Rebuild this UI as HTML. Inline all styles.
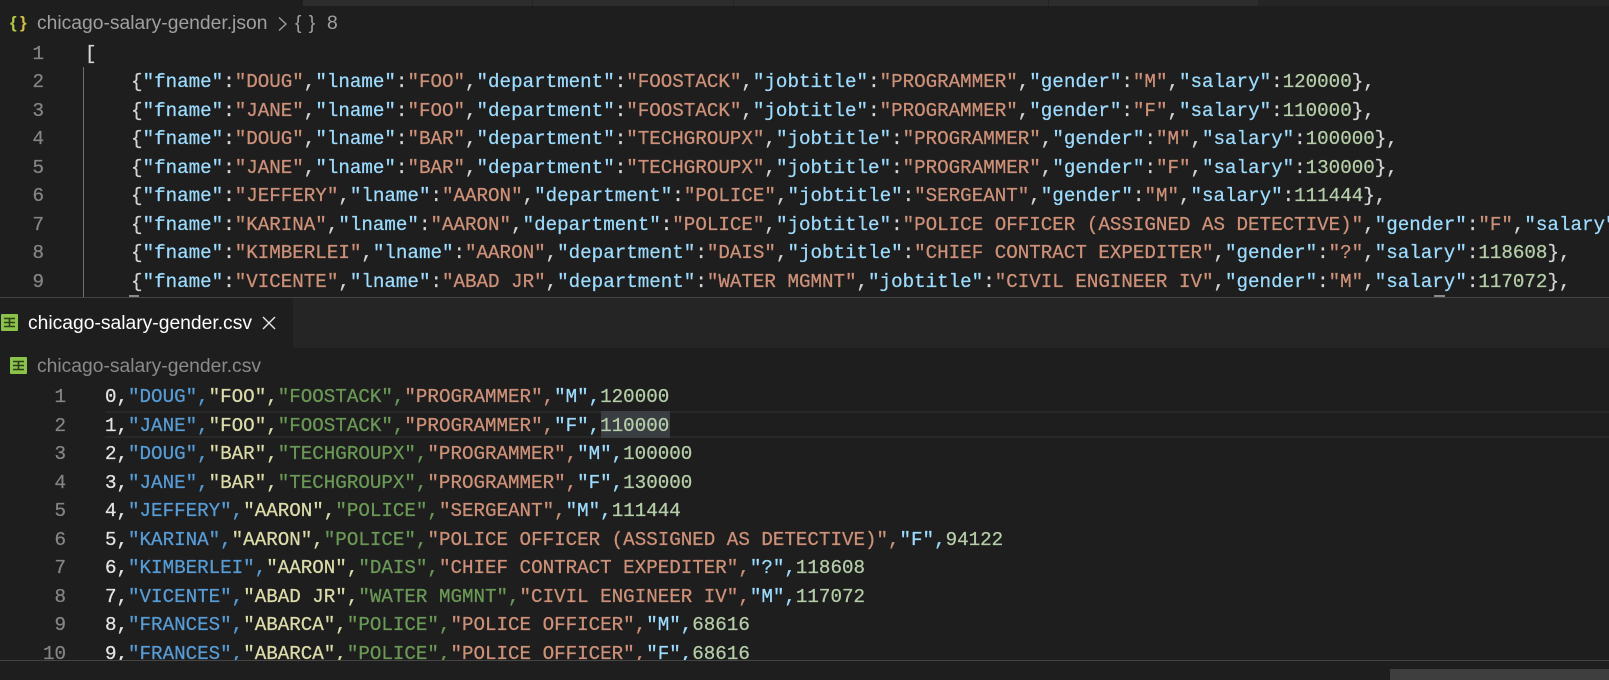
<!DOCTYPE html>
<html><head><meta charset="utf-8"><style>
html,body{margin:0;padding:0;background:#1e1e1e}
#r{position:relative;width:1609px;height:680px;overflow:hidden;background:#1e1e1e}
.a{position:absolute}
.u{font-family:"Liberation Sans",sans-serif;font-size:19.3px;line-height:24px;white-space:nowrap}
.c{position:absolute;font-family:"Liberation Mono",monospace;font-size:19.2px;line-height:28.55px;white-space:pre;color:#d4d4d4;-webkit-text-stroke:0.25px}
.n{position:absolute;font-family:"Liberation Mono",monospace;font-size:19.2px;line-height:28.55px;color:#858585;text-align:right;-webkit-text-stroke:0.25px}
.k{color:#9cdcfe}.s{color:#ce9178}.v{color:#b5cea8}
.w{color:#e4e4e4}.b{color:#569cd6}.y{color:#dcdcaa}.g{color:#6a9955}.o{color:#ce9178}
</style></head><body><div id="r">
<div class="a" style="left:303px;top:0;width:1306px;height:6px;background:#252526"></div>
<div class="a" style="left:303px;top:0;width:955px;height:6px;background:#2d2d2d"></div>
<div class="a" style="left:532px;top:0;width:1px;height:6px;background:#252526"></div>
<div class="a" style="left:733px;top:0;width:1px;height:6px;background:#252526"></div>
<div class="a" style="left:1048px;top:0;width:1px;height:6px;background:#252526"></div>

<div class="a u" style="left:10px;top:11px;font-weight:bold;font-size:17px;color:#b5c93a">{</div>
<div class="a u" style="left:20px;top:11px;font-weight:bold;font-size:17px;color:#d4bf3c">}</div>
<div class="a u" style="left:37px;top:12px;color:#a0a0a0">chicago-salary-gender.json</div>
<svg class="a" style="left:276px;top:16px" width="14" height="16"><path d="M3 1.5 L10 8 L3 14.5" fill="none" stroke="#a0a0a0" stroke-width="1.3"/></svg>
<div class="a u" style="left:295px;top:12px;color:#a0a0a0;letter-spacing:1px">{ }</div>
<div class="a u" style="left:327px;top:12px;color:#a0a0a0">8</div>

<div class="n" style="left:0;top:39.5px;width:44px">1<br>2<br>3<br>4<br>5<br>6<br>7<br>8<br>9</div>
<div class="a" style="left:83px;top:67px;width:1px;height:231px;background:#707070"></div>
<div class="c" style="left:85px;top:39.5px;width:1524px;height:258px;overflow:hidden">[
    {<span class="k">"fname"</span>:<span class="s">"DOUG"</span>,<span class="k">"lname"</span>:<span class="s">"FOO"</span>,<span class="k">"department"</span>:<span class="s">"FOOSTACK"</span>,<span class="k">"jobtitle"</span>:<span class="s">"PROGRAMMER"</span>,<span class="k">"gender"</span>:<span class="s">"M"</span>,<span class="k">"salary"</span>:<span class="v">120000</span>},
    {<span class="k">"fname"</span>:<span class="s">"JANE"</span>,<span class="k">"lname"</span>:<span class="s">"FOO"</span>,<span class="k">"department"</span>:<span class="s">"FOOSTACK"</span>,<span class="k">"jobtitle"</span>:<span class="s">"PROGRAMMER"</span>,<span class="k">"gender"</span>:<span class="s">"F"</span>,<span class="k">"salary"</span>:<span class="v">110000</span>},
    {<span class="k">"fname"</span>:<span class="s">"DOUG"</span>,<span class="k">"lname"</span>:<span class="s">"BAR"</span>,<span class="k">"department"</span>:<span class="s">"TECHGROUPX"</span>,<span class="k">"jobtitle"</span>:<span class="s">"PROGRAMMER"</span>,<span class="k">"gender"</span>:<span class="s">"M"</span>,<span class="k">"salary"</span>:<span class="v">100000</span>},
    {<span class="k">"fname"</span>:<span class="s">"JANE"</span>,<span class="k">"lname"</span>:<span class="s">"BAR"</span>,<span class="k">"department"</span>:<span class="s">"TECHGROUPX"</span>,<span class="k">"jobtitle"</span>:<span class="s">"PROGRAMMER"</span>,<span class="k">"gender"</span>:<span class="s">"F"</span>,<span class="k">"salary"</span>:<span class="v">130000</span>},
    {<span class="k">"fname"</span>:<span class="s">"JEFFERY"</span>,<span class="k">"lname"</span>:<span class="s">"AARON"</span>,<span class="k">"department"</span>:<span class="s">"POLICE"</span>,<span class="k">"jobtitle"</span>:<span class="s">"SERGEANT"</span>,<span class="k">"gender"</span>:<span class="s">"M"</span>,<span class="k">"salary"</span>:<span class="v">111444</span>},
    {<span class="k">"fname"</span>:<span class="s">"KARINA"</span>,<span class="k">"lname"</span>:<span class="s">"AARON"</span>,<span class="k">"department"</span>:<span class="s">"POLICE"</span>,<span class="k">"jobtitle"</span>:<span class="s">"POLICE OFFICER (ASSIGNED AS DETECTIVE)"</span>,<span class="k">"gender"</span>:<span class="s">"F"</span>,<span class="k">"salary"</span>:<span class="v">94122</span>},
    {<span class="k">"fname"</span>:<span class="s">"KIMBERLEI"</span>,<span class="k">"lname"</span>:<span class="s">"AARON"</span>,<span class="k">"department"</span>:<span class="s">"DAIS"</span>,<span class="k">"jobtitle"</span>:<span class="s">"CHIEF CONTRACT EXPEDITER"</span>,<span class="k">"gender"</span>:<span class="s">"?"</span>,<span class="k">"salary"</span>:<span class="v">118608</span>},
    {<span class="k">"fname"</span>:<span class="s">"VICENTE"</span>,<span class="k">"lname"</span>:<span class="s">"ABAD JR"</span>,<span class="k">"department"</span>:<span class="s">"WATER MGMNT"</span>,<span class="k">"jobtitle"</span>:<span class="s">"CIVIL ENGINEER IV"</span>,<span class="k">"gender"</span>:<span class="s">"M"</span>,<span class="k">"salary"</span>:<span class="v">117072</span>},</div>
<div class="a" style="left:129px;top:295px;width:10px;height:2px;background:#8a8a8a"></div>
<div class="a" style="left:1434px;top:295px;width:11px;height:2px;background:#8a8a8a"></div>

<div class="a" style="left:0;top:297px;width:1609px;height:1px;background:#444"></div>
<div class="a" style="left:293px;top:298px;width:1316px;height:50px;background:#252526"></div>

<svg class="a" style="left:1px;top:314px" width="17" height="17"><rect width="17" height="17" rx="1" fill="#8bc34a"/><path d="M3 4.5H14M3 8.5H14M3 12.5H14M8.5 4V13" stroke="#2c3d18" stroke-width="1.6" fill="none"/></svg>
<div class="a u" style="left:28px;top:312px;color:#ffffff">chicago-salary-gender.csv</div>
<svg class="a" style="left:262px;top:316px" width="14" height="14"><path d="M1 1 L13 13 M13 1 L1 13" stroke="#e8e8e8" stroke-width="1.4" fill="none"/></svg>

<svg class="a" style="left:10px;top:357px" width="17" height="17"><rect width="17" height="17" rx="1" fill="#8bc34a"/><path d="M3 4.5H14M3 8.5H14M3 12.5H14M8.5 4V13" stroke="#2c3d18" stroke-width="1.6" fill="none"/></svg>
<div class="a u" style="left:37px;top:355px;color:#8a8a8a">chicago-salary-gender.csv</div>

<div class="a" style="left:105px;top:411px;width:1504px;height:27px;box-sizing:border-box;border-top:2px solid #282828;border-bottom:2px solid #282828"></div>
<div class="a" style="left:601px;top:411px;width:69px;height:27px;background:#3a3d41"></div>

<div class="a" style="left:0;top:383px;width:1609px;height:278px;overflow:hidden">
<div class="n" style="left:0;top:0;width:66px">1<br>2<br>3<br>4<br>5<br>6<br>7<br>8<br>9<br>10</div>
<div class="c" style="left:105px;top:0"><span class="w">0,</span><span class="b">"DOUG",</span><span class="y">"FOO",</span><span class="g">"FOOSTACK",</span><span class="o">"PROGRAMMER",</span><span class="k">"M",</span><span class="v">120000</span>
<span class="w">1,</span><span class="b">"JANE",</span><span class="y">"FOO",</span><span class="g">"FOOSTACK",</span><span class="o">"PROGRAMMER",</span><span class="k">"F",</span><span class="v">110000</span>
<span class="w">2,</span><span class="b">"DOUG",</span><span class="y">"BAR",</span><span class="g">"TECHGROUPX",</span><span class="o">"PROGRAMMER",</span><span class="k">"M",</span><span class="v">100000</span>
<span class="w">3,</span><span class="b">"JANE",</span><span class="y">"BAR",</span><span class="g">"TECHGROUPX",</span><span class="o">"PROGRAMMER",</span><span class="k">"F",</span><span class="v">130000</span>
<span class="w">4,</span><span class="b">"JEFFERY",</span><span class="y">"AARON",</span><span class="g">"POLICE",</span><span class="o">"SERGEANT",</span><span class="k">"M",</span><span class="v">111444</span>
<span class="w">5,</span><span class="b">"KARINA",</span><span class="y">"AARON",</span><span class="g">"POLICE",</span><span class="o">"POLICE OFFICER (ASSIGNED AS DETECTIVE)",</span><span class="k">"F",</span><span class="v">94122</span>
<span class="w">6,</span><span class="b">"KIMBERLEI",</span><span class="y">"AARON",</span><span class="g">"DAIS",</span><span class="o">"CHIEF CONTRACT EXPEDITER",</span><span class="k">"?",</span><span class="v">118608</span>
<span class="w">7,</span><span class="b">"VICENTE",</span><span class="y">"ABAD JR",</span><span class="g">"WATER MGMNT",</span><span class="o">"CIVIL ENGINEER IV",</span><span class="k">"M",</span><span class="v">117072</span>
<span class="w">8,</span><span class="b">"FRANCES",</span><span class="y">"ABARCA",</span><span class="g">"POLICE",</span><span class="o">"POLICE OFFICER",</span><span class="k">"M",</span><span class="v">68616</span>
<span class="w">9,</span><span class="b">"FRANCES",</span><span class="y">"ABARCA",</span><span class="g">"POLICE",</span><span class="o">"POLICE OFFICER",</span><span class="k">"F",</span><span class="v">68616</span></div>
</div>

<div class="a" style="left:0;top:660px;width:1609px;height:1px;background:#444"></div>
<div class="a" style="left:1390px;top:669px;width:219px;height:11px;background:#3e3e3e"></div>
</div></body></html>
